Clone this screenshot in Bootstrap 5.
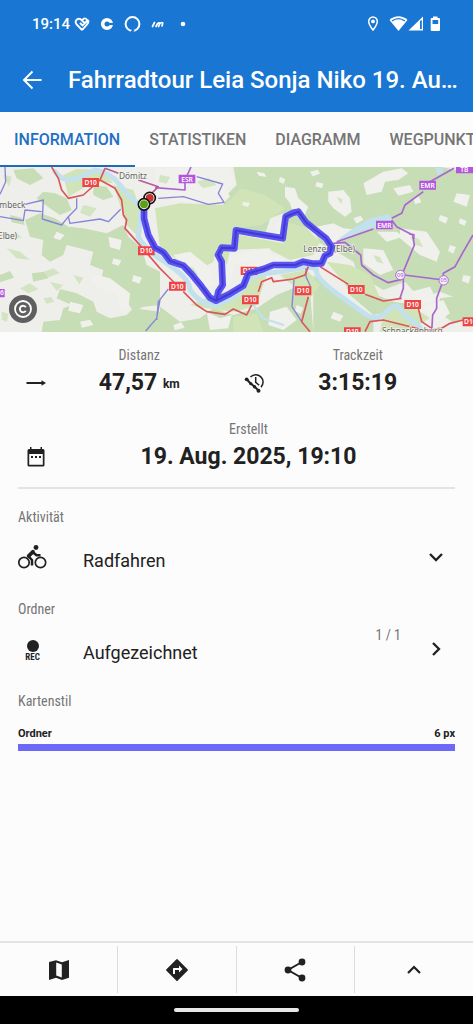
<!DOCTYPE html>
<html lang="de">
<head>
<meta charset="utf-8">
<meta name="viewport" content="width=device-width, initial-scale=1">
<title>Fahrradtour Leia Sonja Niko</title>
<link href="https://cdn.jsdelivr.net/npm/bootstrap@5.3.0/dist/css/bootstrap.min.css" rel="stylesheet">
<style>
  body { font-family: Roboto, "Liberation Sans", sans-serif; background: #fcfcfc; color: #212121; line-height: 1.25; }
  button { color: inherit; font-family: inherit; }
  svg { display: block; flex: none; }
  .top-area { background: #1976d2; color: #fff; }
  .status-line { height: 48px; padding: 0 32px; font-size: 15px; font-weight: 500; }
  .title-line { height: 64px; padding: 0 16px 0 20px; }
  .title-line h1 { font-size: 24px; font-weight: 500; margin-left: 24px; }
  .tab-strip { height: 55px; overflow: hidden; }
  .tab-strip .nav-link { padding: 2px 15px 0 14px; color: #757575; font-size: 16px; font-weight: 500; white-space: nowrap; display: flex; align-items: center; border-bottom: 2px solid transparent; border-radius: 0; }
  .tab-strip .nav-link.active { color: #1f70c4; border-color: #1f6bb8; }
  .map-box { height: 165px; }
  .map-box svg { width: 100%; height: 100%; }
  .map-btn { left: 9px; bottom: 9px; }
  .page-body { padding: 14px 18px 0; }
  .stat { padding-right: 12px; }
  .stat-created { margin-top: 18px; }
  .stat-icon { width: 36px; height: 38px; display: flex; align-items: center; justify-content: center; }
  .caption { font-family: "Roboto Condensed", Roboto, "Liberation Sans", sans-serif; font-size: 14px; line-height: 18px; color: #757575; font-weight: 400; }
  .value { font-size: 23px; font-weight: 700; line-height: 38px; }
  .unit { font-size: 12px; line-height: 12px; vertical-align: 2px; }
  .rule { border-top: 2px solid #e4e4e4; margin: 11px 0 19px; }
  .field { height: 66px; }
  .field-icon { width: 29px; left: 0; }
  .field-text { padding: 8px 0 0 65px; font-size: 18px; line-height: 24px; border: 0; background: transparent; color: #212121; appearance: none; }
  .rec { font-family: "Roboto Condensed", Roboto, sans-serif; font-size: 9px; font-weight: 700; line-height: 11px; }
  .strong-caption { font-size: 11px; font-weight: 700; line-height: 16px; }
  .line-sample { height: 7px; background: #6c68f8; margin-top: 2px; }
  .tool-strip { height: 55px; border-top: 2px solid #e4e4e4; padding: 3px 0; background: #fcfcfc; }
  .tool-strip .tool { border: 0; border-right: 1px solid #dcdcdc; }
  .tool-strip .tool:last-child { border-right: 0; }
  .gesture { height: 28px; background: #000; }
  .pill { width: 125px; height: 4px; border-radius: 2px; background: #e8e8e8; }
</style>
</head>
<body class="d-flex flex-column min-vh-100">

<header class="top-area">
  <div class="status-line d-flex align-items-center justify-content-between">
    <div class="d-flex align-items-center">
      <span>19:14</span>
      <svg class="ms-1" width="114" height="20" viewBox="0 0 114 20" fill="none" stroke="#fff" aria-hidden="true">
        <path d="M8 16 2.600 10.500C-.2 6.500 4.500 2.500 8 6.500l3 3M6 9l2.500 2.500 5-5C11.500 3 9.500 4.500 8 6.500M14 6c1.500 2.500-1 4.500-6 10" stroke-width="1.900"/>
        <circle cx="33" cy="10" r="4.300" stroke-width="3.600"/>
        <path d="M33 10h7" stroke="#1976d2" stroke-width="2.200"/>
        <circle cx="58.500" cy="10" r="6.900" stroke-width="2"/>
        <path d="m56.500 18 2-3 2 1-1 2z" fill="#1976d2" stroke="none"/>
        <path d="m78.500 12.500 2-4M82 12.500l1.300-2.500c1-1.800 2.800-1.300 2.300 0L84.600 12.500M85.800 9.800c1.500-2 3.500-1.500 2.800 0L88 12" stroke-width="1.700" stroke-linecap="round"/>
        <circle cx="109" cy="10" r="2.300" fill="#fff" stroke="none"/>
      </svg>
    </div>
    <svg width="74" height="18" viewBox="0 0 74 18" fill="#fff" aria-hidden="true">
      <path d="M6 2a4.300 4.300 0 0 0-4.300 4.400C1.700 9.500 6 15 6 15s4.300-5.500 4.300-8.600A4.300 4.300 0 0 0 6 2Z" fill="none" stroke="#fff" stroke-width="1.500"/>
      <circle cx="6" cy="6.400" r="1.900"/>
      <path d="M31.500 16 22.500 5c5-5 13-5 18 0Z"/><path d="M25 6c4-3 9-3 13 0" fill="none" stroke="#1976d2" stroke-width="1.200"/>
      <path d="M41.500 15.500 56 1.500v14Z"/><path d="M53 6v8h1.800V5z" fill="#1976d2"/>
      <path d="M66 1.500h4.500V3H72q1 0 1 1v11q0 1-1 1h-7.300q-1 0-1-1V4q0-1 1-1H66Z"/><path d="M65.500 5h5.700v4h-5.700z" fill="#1976d2"/>
    </svg>
  </div>
  <div class="title-line d-flex align-items-center">
    <button type="button" class="btn p-0 border-0 text-white" aria-label="Zurück">
      <svg width="24" height="24" viewBox="0 0 24 24" fill="none" stroke="currentColor" stroke-width="2"><path d="M21.500 12H4.500M12.500 3.500 4 12l8.500 8.500"/></svg>
    </button>
    <h1 class="mb-0 text-nowrap">Fahrradtour Leia Sonja Niko 19. Au…</h1>
  </div>
</header>

<nav class="nav flex-nowrap tab-strip" aria-label="Ansichten">
  <a class="nav-link active" aria-current="page" href="#info">INFORMATION</a>
  <a class="nav-link" href="#stat">STATISTIKEN</a>
  <a class="nav-link" href="#dia">DIAGRAMM</a>
  <a class="nav-link" href="#weg">WEGPUNKTE</a>
</nav>

<div class="map-box position-relative">
  <svg viewBox="0 6 1419 495" preserveAspectRatio="xMidYMid slice" role="img" aria-label="Karte der Tour" font-family="'Noto Sans', sans-serif">
    <path fill="#eeeeea" d="M0 0h1419v510H0z"/>
    <!-- woodland -->
    <g fill="#c6ddb6">
      <path d="M75 165 120 145 165 160 205 185 250 190 320 205 370 180 385 215 425 250 440 300 480 320V420L430 425 400 440 375 400 340 380 300 355 310 315 270 300 280 260 240 250 200 240 190 270 150 290 125 270 130 225 90 215Z"/>
      <path d="M180 372 230 385 280 410 290 440 330 460 380 450 400 430 480 440V501H125L130 470 180 465 190 430 215 420 170 400Z"/>
      <path d="M110 100 130 80 165 85 200 100 215 135 180 150 150 130ZM40 15 100 10 130 40 90 60 50 40ZM95 325l40-5 10 20-45 10zM0 330l30-12 12 20-42 14zM30 150l35 8 10 22-40-8zM280 60l40 5 20 30-30 10-30-15z"/>
      <path d="M700 6H1325L1390 20H1419V410L1360 395 1320 380 1260 400 1215 350 1150 375 1075 330 1060 290 1010 260 960 235 940 195 870 180 850 145 810 160 795 210 710 200 690 170 665 150 675 95 710 60Z"/>
      <path d="M1020 320 1080 345 1130 390 1180 410 1250 420 1230 460 1170 440 1120 450 1050 390ZM480 425 540 470 600 460 640 430 700 450 770 430 830 390 880 370 930 380 940 501H480Z"/>
      <path d="M940 330l60 45 60 45 60 40v41H940zM1320 400l99-12V460l-60 12-45-30z"/>
    </g>
    <!-- meadows -->
    <g fill="#d0e4b8">
      <path d="M465 130 540 115 680 120 710 190 700 240 650 250 640 290 590 320 540 290 480 250Z"/>
      <path d="M660 170 720 210 850 235 860 170 920 190 960 230 940 270 870 285 800 250 690 255 680 300 665 270ZM190 30 230 12 310 15 340 55 290 50 250 70 205 95ZM340 60 400 75 420 130 415 215 380 180ZM980 290 1050 300 1110 330 1140 400 1090 390 1020 340ZM840 330 920 315 960 360 930 400 890 370ZM570 420l70-30 80-20 30-40 50 0-30 90-60 20-60-5z"/>
      <path d="M1150 440l80-20 60 40-70 40h-80zM700 455l70-10 20 56h-90zM665 130l60-60 70 20 60 40-70 50-90 10z"/>
    </g>
    <!-- clearings -->
    <g fill="#f0f0ec">
      <path d="M465 10 690 8 705 50 680 75 690 95 670 115 560 110 465 95ZM855 65l30 5 10 30 30 25-15 35-30-10-10-35-15-20zM985 80l45-5 20 25 5 40-20 15-35-25-15-20zM1090 55l60-35 55-10 20 15-30 20-40 5-10 30-45 10zM1180 70l50-10 10 20-45 12zM1370 85l40 5-10 35-40-15zM690 270l120-20 5 25-110 20-15 70-20-20zM520 270l50-10 50 40 30 60-30 10-60-50zM1090 250l60 5 30 60-40 15-50-35zM1200 190l80 10 40 60-10 30-50-20-60-50zM1230 380l60-15 20 40-50 10zM830 170l25-5-5 65-30-10zM1270 425l60-20 20 40-40 30zM1130 200l60 0 20 15-50 15z"/>
      <path d="M325 215l40 10-5 30-30-8zM270 325l60 15 60 45-5 50-20 5-15-50-70-30zM210 410l40 10-10 25-35-8zM620 440l40 20 35-10-10 40-55 5zM810 440l50-15 30 40-40 30-45-15zM950 185l50-10 30 15 50 5-30 20-60 25-30-20zM720 310l60-30 50-5 30 12-70 15-50 20z"/>
      <path d="M770 20l22 4 8 12-24-4zM840 35l16 8-6 14-14-8zM950 50l20 6-4 14-20-6zM1320 150l24 8-6 18-22-10zM1240 100l16-6 8 18-18 6zM1060 160l22-8 8 12-20 12zM1380 160l20 8-6 14-18-8zM1350 240l18 6-8 20-16-8zM730 110l20 4-6 12-18-6zM930 20l24-6 6 12-22 8zM1390 330l22 4-6 22-20-8zM340 280l24 6-8 16-20-6zM170 200l24 10-14 16-20-8zM400 330l26 8-8 18-22-8zM240 470l30-6 10 16-34 8zM1000 440l30 12-10 18-28-10zM520 480l24-8 10 16-30 8zM890 420l20 8-8 18-18-8z"/>
    </g>
    <g fill="#d3e4c3">
      <path d="M20 250l40 10 30 25-40-5zM130 320l30-10 20 15-35 12zM60 370l30-15 25 18-30 12zM220 330l30 8-12 20zM150 350l40 10-20 18zM10 30l25 5-8 30zM250 120l40 10-20 25-30-12zM20 210l30-5 15 12-30 8zM1010 95l18 8-5 15zM590 50l35-10 25 20-40 10zM560 300l20 8 15 24-20-10zM5 440l20 6-4 24-16-6zM130 400l24-4 8 14-22 6zM1120 270l20 6 10 20-20-6zM1230 215l26 6 14 26-24-8zM480 30l30 6-10 20-24-6z"/>
    </g>
    <!-- water -->
    <g fill="none" stroke="#c2e1ed" stroke-linecap="round" stroke-linejoin="round">
      <path d="M165 20Q190 55 230 40T285 15Q330 20 360 60T425 125Q420 180 415 215 430 250 500 295T570 375Q610 430 660 415T730 365 800 325 900 310 950 320 1010 385 1100 450 1160 440 1200 430 1240 470 1260 501" stroke-width="15"/>
      <path d="M760 420l30 40 60 20" stroke-width="6"/>
    </g>
    <path fill="#c2e1ed" d="M1015 222 1060 190 1110 160 1165 148 1180 165 1130 185 1075 202 1025 228ZM1305 10l20-4 5 15-15 10z"/>
    <!-- side routes -->
    <g fill="none" stroke="#8784d6" stroke-width="4" stroke-linejoin="round">
      <path d="M15 6 17 50 0 88M0 155 70 167 75 135 125 140M75 118 130 105 127 162 185 180 205 155 230 130 230 100M205 155 210 175 300 162 325 170 362 133M480 405 470 460 437 498M590 35 668 57 655 85 672 112 625 118 550 95 475 100M505 372 475 410 470 465M918 310 918 335 932 365M882 345 876 425 905 470"/>
    </g>
    <g fill="none" stroke="#a866cf" stroke-width="5" stroke-linejoin="round">
      <path d="M573 6 555 45 555 75 465 68M1362 10 1290 50M1270 80 1215 120 1205 145 1175 160M1120 192 1010 230M1000 235 1035 232 1082 270 1085 300 1120 330 1165 353 1205 343M1175 165 1190 185 1238 210 1243 240 1210 320 1210 370 1200 400M1213 330 1330 345M1419 210 1390 260 1365 305 1330 325 1330 345 1310 400 1310 430 1298 450 1295 500"/>
      <path d="M1228 208h14v14" stroke-width="4"/>
    </g>
    <g fill="none" stroke="#dc5558" stroke-width="5" stroke-linejoin="round">
      <path d="M155 6 175 40 185 75 205 100 250 90 300 45 315 10M300 45 345 70 365 105 370 150 380 165 375 190 415 235 480 310 500 330 530 360M550 380 590 420 620 440 675 448 700 432 740 450 755 420M775 380 785 350 815 338 820 350 880 342 915 330 925 305M925 395 905 470 930 500M960 305 1045 358M1095 388 1150 408 1205 400M1255 430 1265 470 1295 490M1095 500 1110 470 1150 465 1270 495 1325 490 1350 475 1390 465"/>
      <path d="M315 10 355 25M415 45 475 65 450 90" stroke="#b45c9c"/>
    </g>
    <!-- place names -->
    <g fill="#646464" stroke="#f4f4ef" stroke-width="4" paint-order="stroke" font-size="25">
      <text x="357" y="42">Dömitz</text><text x="-2" y="128">mbeck</text><text x="-6" y="223">Elbe)</text>
      <text x="910" y="262">Lenzen (Elbe)</text><text x="1146" y="507">Schnackenburg</text>
    </g>
    <!-- route shields -->
    <g font-size="20" font-weight="600" fill="#fff" text-anchor="middle">
      <path fill="#ee4444" d="M247 39h50v27h-50zM414 244h50v27h-50zM507 350h50v27h-50zM726 391h50v27h-50zM884 364h50v27h-50zM722 305h50v25h-50zM1044 360h50v27h-50zM1213 405h50v27h-50zM1032 487h50v20h-50zM1388 457h50v27h-50z"/>
      <path fill="#b455de" d="M536 29h50v26h-50zM1258 47h50v27h-50zM1128 167h50v26h-50zM1368 4h60v21h-60zM-20 372h34v25h-34z"/>
      <text x="272" y="60">D10</text><text x="439" y="265">D10</text><text x="532" y="371">D10</text><text x="751" y="412">D10</text><text x="909" y="385">D10</text><text x="747" y="325">D10</text><text x="1069" y="381">D10</text><text x="1238" y="426">D10</text><text x="1057" y="507">D10</text><text x="1411" y="478">D10</text>
      <text x="561" y="50">ESR</text><text x="1283" y="68">EMR</text><text x="1153" y="188">EMR</text><text x="1393" y="20">TB</text><text x="6" y="391">6</text>
    </g>
    <g fill="#f6eef9" stroke="#b36bd6" stroke-width="3"><circle cx="1201" cy="330" r="14"/><circle cx="1331" cy="346" r="14"/></g>
    <g fill="#a35bcc" font-size="17" text-anchor="middle"><text x="1201" y="336">09</text><text x="1331" y="352">05</text></g>
    <!-- recorded track -->
    <g fill="none" stroke-linejoin="round" stroke-linecap="round">
      <path d="M432 118 432 160 445 210 465 248 490 262 510 288 550 302 575 328 605 365 630 398 648 407 690 386 730 362 745 325 790 312 820 300 885 300 910 290 940 296 965 295 975 272 990 265 995 245 978 220 940 190 918 172 895 140M880 143 857 155 848 220 708 196 703 250 665 248 654 270 665 290 668 360 655 380 650 405M880 143 895 140" stroke="#5049f4" stroke-opacity=".93" stroke-width="20"/>
      <path d="M432 118 432 160 445 210 465 248 490 262 510 288 550 302 575 328 605 365 630 398 648 407 690 386 730 362 745 325 790 312 820 300 885 300 910 290 940 296 965 295 975 272 990 265 995 245 978 220 940 190 918 172 895 140 857 155 848 220 708 196 703 250 665 248 654 270 665 290 668 360 655 380 650 405" stroke="#4238d2" stroke-width="6"/>
    </g>
    <circle cx="449" cy="99" r="17" fill="#fff" stroke="#111" stroke-width="5"/><circle cx="449" cy="99" r="12" fill="#c8342e"/>
    <circle cx="432" cy="118" r="17" fill="#fff" stroke="#111" stroke-width="5"/><circle cx="432" cy="118" r="12" fill="#5da014"/>
  </svg>
  <button type="button" class="btn p-0 border-0 position-absolute map-btn" aria-label="Kartenrechte">
    <svg width="28" height="28" viewBox="0 0 28 28"><circle cx="14" cy="14" r="14" fill="#5f5f5f"/><g fill="none" stroke="#fff"><circle cx="14" cy="14" r="8" stroke-width="1.800"/><path d="M16.800 12.300a3.200 3.200 0 1 0 0 3.400" stroke-width="1.900"/></g></svg>
  </button>
</div>

<main class="page-body">
  <div class="row g-0">
    <div class="col-6 d-flex align-items-end stat">
      <div class="stat-icon">
        <svg width="20" height="8" viewBox="0 0 20 8" fill="#212121"><path d="M.5 3.100h15V1.200L20 4l-4.500 2.800V4.900H.5Z"/></svg>
      </div>
      <div class="flex-grow-1 text-center"><div class="caption">Distanz</div><div class="value">47,57 <span class="unit">km</span></div></div>
    </div>
    <div class="col-6 d-flex align-items-end stat">
      <div class="stat-icon">
        <svg width="22" height="22" viewBox="0 0 22 22" fill="none" stroke="#212121"><path d="M6.500 5A7.300 7.300 0 1 1 17 15.200" stroke-width="1.500"/><path d="M11.700 5v5.300l3.500 3" stroke-width="1.500"/><path d="m2.500 7 4 4.500 4 3 4 4" stroke-width="2"/><g fill="#212121" stroke="none"><circle cx="2.700" cy="7.300" r="1.900"/><circle cx="6.700" cy="11.600" r="1.700"/><circle cx="10.500" cy="14.700" r="1.700"/><circle cx="14.500" cy="18.800" r="2"/></g></svg>
      </div>
      <div class="flex-grow-1 text-center"><div class="caption">Trackzeit</div><div class="value">3:15:19</div></div>
    </div>
  </div>
  <div class="d-flex align-items-end stat stat-created">
    <div class="stat-icon">
      <svg width="18" height="20" viewBox="0 0 18 20" fill="#212121"><path fill-rule="evenodd" d="M3 0h1.500v2h9V0H15v2h1q1.500 0 1.500 1.500v14.500q0 1.500-1.500 1.500H2Q.5 19.500.5 18V3.500Q.5 2 2 2h1ZM2.200 7v10.800h13.600V7Z"/><path d="M4 9h2v2H4zM8 9h2v2H8zM12 9h2v2h-2z"/></svg>
    </div>
    <div class="flex-grow-1 text-center"><div class="caption">Erstellt</div><div class="value">19. Aug. 2025, 19:10</div></div>
  </div>

  <div class="rule"></div>

  <label class="caption d-block" for="activity">Aktivität</label>
  <div class="field d-flex align-items-center position-relative mb-2 pb-1">
    <svg class="position-absolute field-icon" height="24" viewBox="0 0 29 24" fill="none" stroke="#212121"><circle cx="6" cy="17.500" r="5.200" stroke-width="1.700"/><circle cx="22.500" cy="17.500" r="5.200" stroke-width="1.700"/><circle cx="18" cy="2.500" r="2.400" fill="#212121" stroke="none"/><path d="M14 20.500v-5.500l-3.300-3.500 4.300-4.200 3.500 3h4" stroke-width="2.500" stroke-linejoin="round"/><path d="M10.500 11 15 6.500" stroke-width="3.500" stroke-linecap="round"/></svg>
    <select id="activity" class="field-text w-100"><option>Radfahren</option></select>
    <svg class="position-absolute end-0 me-2" width="22" height="22" viewBox="0 0 22 22" fill="none" stroke="#212121" stroke-width="2.300" aria-hidden="true"><path d="m5 8 6 6 6-6"/></svg>
  </div>

  <div class="caption" id="folder-label">Ordner</div>
  <button type="button" class="btn field d-flex align-items-center position-relative w-100 p-0 border-0 rounded-0 mb-2 pb-1 text-start" aria-describedby="folder-label">
    <span class="position-absolute field-icon d-flex flex-column align-items-center pt-1">
      <svg width="12" height="12" viewBox="0 0 12 12"><circle cx="6" cy="6" r="6" fill="#212121"/></svg>
      <span class="rec">REC</span>
    </span>
    <span class="field-text flex-grow-1">Aufgezeichnet</span>
    <span class="caption align-self-start mt-2 me-3">1 / 1</span>
    <svg class="ms-2 me-2" width="22" height="22" viewBox="0 0 22 22" fill="none" stroke="#212121" stroke-width="2.300" aria-hidden="true"><path d="m8 5 6 6-6 6"/></svg>
  </button>

  <div class="caption">Kartenstil</div>
  <div class="d-flex justify-content-between strong-caption mt-3"><span>Ordner</span><span>6 px</span></div>
  <div class="line-sample"></div>
</main>

<footer class="mt-auto">
  <div class="tool-strip d-flex">
    <button type="button" class="btn tool flex-fill w-25 rounded-0 p-0 d-flex align-items-center justify-content-center" aria-label="Karte">
      <svg width="24" height="24" viewBox="0 0 24 24" fill="#212121"><path fill-rule="evenodd" d="m15 4.200-6-2L2 4v18l7-2.200 6 2.200 7-2.200V2ZM9.200 4.500l5.600 2v13l-5.600-2Z"/></svg>
    </button>
    <button type="button" class="btn tool flex-fill w-25 rounded-0 p-0 d-flex align-items-center justify-content-center" aria-label="Navigation">
      <svg width="24" height="24" viewBox="0 0 24 24" fill="#212121"><path d="m22.500 11.200-9.700-9.700a1 1 0 0 0-1.600 0l-9.700 9.700a1 1 0 0 0 0 1.600l9.700 9.700a1 1 0 0 0 1.600 0l9.700-9.700a1 1 0 0 0 0-1.600ZM14 14.500V12h-4v4H8v-5c0-.6.4-1 1-1h5V7.500l3.500 3.500Z"/></svg>
    </button>
    <button type="button" class="btn tool flex-fill w-25 rounded-0 p-0 d-flex align-items-center justify-content-center" aria-label="Teilen">
      <svg width="24" height="24" viewBox="0 0 24 24" fill="#212121" stroke="#212121"><path d="M19 4 5 12l14 8" fill="none" stroke-width="2"/><g stroke="none"><circle cx="19" cy="4" r="3.400"/><circle cx="5" cy="12" r="3.400"/><circle cx="19" cy="20" r="3.400"/></g></svg>
    </button>
    <button type="button" class="btn tool flex-fill w-25 rounded-0 p-0 d-flex align-items-center justify-content-center" aria-label="Mehr">
      <svg width="22" height="22" viewBox="0 0 22 22" fill="none" stroke="#212121" stroke-width="2.200"><path d="m5 14 6-6 6 6"/></svg>
    </button>
  </div>
  <div class="gesture d-flex align-items-center justify-content-center"><div class="pill"></div></div>
</footer>

<script src="https://cdn.jsdelivr.net/npm/bootstrap@5.3.0/dist/js/bootstrap.bundle.min.js"></script>
</body>
</html>
